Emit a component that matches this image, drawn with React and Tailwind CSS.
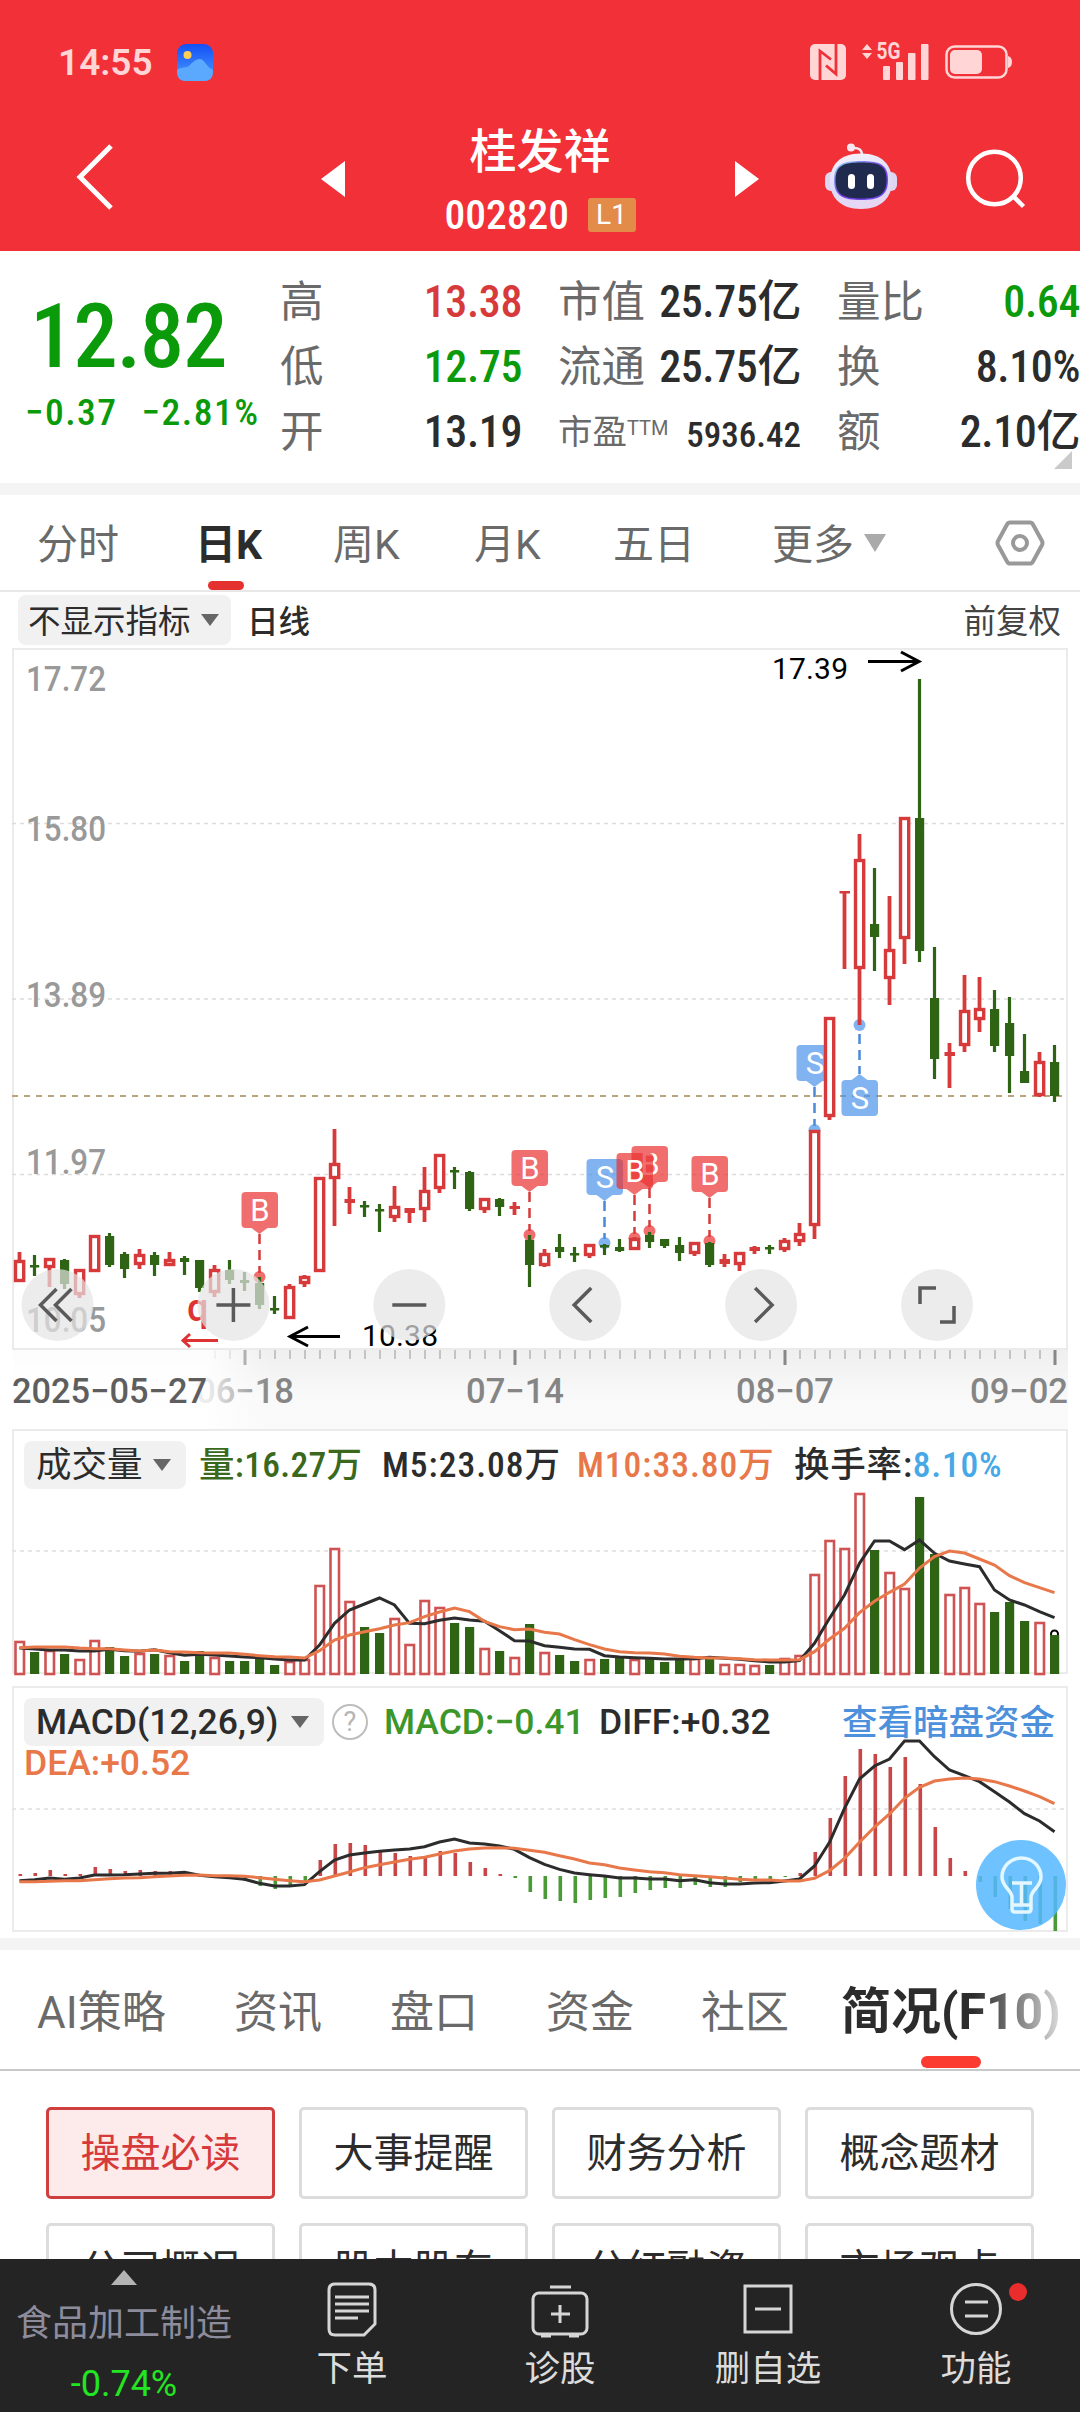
// src/App.jsx
import React from 'react';
import { clsx } from 'clsx';

// --- Dados do gráfico ---
// [cor, máxima, topo do corpo, base do corpo, mínima] em px da tela
const candles = [
    ['r', 1252, 1260, 1282, 1282], ['g', 1255, 1265, 1267, 1276], ['r', 1258, 1258, 1268, 1287], ['g', 1259, 1260, 1284, 1289],
    ['r', 1269, 1269, 1295, 1298], ['r', 1235, 1235, 1272, 1272], ['g', 1233, 1236, 1265, 1267], ['g', 1252, 1254, 1269, 1278],
    ['r', 1249, 1254, 1265, 1269], ['g', 1252, 1255, 1265, 1276], ['r', 1252, 1259, 1266, 1266], ['g', 1256, 1258, 1262, 1275],
    ['g', 1260, 1260, 1288, 1292], ['r', 1265, 1269, 1293, 1297], ['g', 1260, 1270, 1280, 1284], ['g', 1272, 1280, 1283, 1291],
    ['g', 1277, 1283, 1305, 1309], ['g', 1296, 1308, 1310, 1314], ['r', 1284, 1286, 1319, 1319], ['r', 1275, 1276, 1284, 1287],
    ['r', 1177, 1177, 1272, 1272], ['r', 1129, 1163, 1179, 1226], ['r', 1187, 1199, 1203, 1214], ['g', 1201, 1205, 1207, 1217],
    ['g', 1204, 1209, 1211, 1232], ['r', 1186, 1206, 1218, 1222], ['r', 1208, 1208, 1213, 1223], ['r', 1167, 1190, 1210, 1222],
    ['r', 1154, 1154, 1189, 1193], ['g', 1167, 1170, 1172, 1189], ['g', 1171, 1172, 1209, 1211], ['r', 1198, 1198, 1210, 1213],
    ['g', 1198, 1199, 1207, 1216], ['r', 1202, 1206, 1209, 1215], ['g', 1235, 1240, 1265, 1287], ['r', 1249, 1253, 1266, 1267],
    ['g', 1234, 1247, 1252, 1258], ['g', 1247, 1253, 1255, 1262], ['r', 1244, 1244, 1256, 1258], ['g', 1244, 1245, 1247, 1255],
    ['g', 1239, 1247, 1251, 1252], ['r', 1237, 1238, 1250, 1250], ['g', 1232, 1235, 1242, 1248], ['g', 1239, 1239, 1246, 1248],
    ['g', 1237, 1245, 1253, 1261], ['r', 1242, 1242, 1254, 1256], ['g', 1242, 1243, 1265, 1267], ['r', 1254, 1259, 1264, 1267],
    ['r', 1252, 1252, 1265, 1271], ['r', 1246, 1247, 1251, 1254], ['g', 1245, 1247, 1249, 1254], ['r', 1238, 1240, 1250, 1252],
    ['r', 1223, 1233, 1242, 1246], ['r', 1130, 1130, 1226, 1239], ['r', 1017, 1017, 1117, 1120], ['r', 891, 891, 893, 969],
    ['r', 834, 859, 969, 1025], ['g', 868, 924, 937, 971], ['r', 896, 949, 979, 1005], ['r', 817, 817, 939, 964],
    ['g', 679, 818, 951, 962], ['g', 947, 998, 1059, 1079], ['r', 1043, 1052, 1056, 1088], ['r', 975, 1010, 1046, 1052],
    ['r', 977, 1008, 1020, 1032], ['g', 990, 1009, 1046, 1052], ['g', 997, 1023, 1056, 1093], ['g', 1034, 1071, 1083, 1083],
    ['r', 1052, 1061, 1096, 1097], ['g', 1045, 1062, 1096, 1102],
];

const volumes = [
    33, 22, 24, 20, 15, 34, 27, 18, 21, 20, 19, 13, 23, 17, 13, 13, 17, 9, 13, 15,
    89, 126, 73, 47, 41, 56, 30, 74, 67, 51, 47, 26, 23, 17, 50, 22, 19, 13, 15, 15,
    17, 15, 16, 12, 16, 16, 18, 10, 10, 9, 9, 16, 19, 100, 134, 126, 181, 124, 102, 86,
    177, 120, 80, 87, 71, 62, 72, 53, 52, 39,
];

// Linhas em terços de px, a partir do topo de cada painel
const ma5 = [
    684, 687, 690, 690, 693, 693, 688, 692, 694, 689, 698, 706, 703, 705, 708, 711, 713, 717, 720, 720,
    675, 610, 570, 552, 534, 555, 610, 611, 601, 594, 600, 604, 632, 662, 663, 677, 682, 687, 688, 707,
    711, 713, 715, 717, 717, 716, 712, 715, 718, 722, 726, 726, 722, 670, 595, 525, 430, 363, 363, 389,
    360, 400, 423, 432, 440, 510, 540, 555, 575, 593,
];
const ma10 = [
    683, 681, 681, 681, 684, 686, 686, 690, 693, 690, 695, 696, 698, 699, 699, 703, 707, 710, 711, 714,
    692, 660, 645, 635, 626, 615, 608, 590, 576, 564, 575, 604, 620, 629, 627, 637, 642, 659, 674, 687,
    695, 698, 699, 702, 709, 712, 714, 714, 716, 719, 720, 720, 719, 695, 657, 625, 578, 544, 517, 492,
    444, 410, 393, 399, 417, 435, 467, 488, 503, 518,
];
const macd = [
    2, 3, 6, 2, 2, 9, 7, 5, 6, 5, 5, 4, -1, -1, -3, -5, -10, -13, -10, -6,
    16, 32, 33, 31, 26, 23, 20, 19, 25, 23, 14, 8, 2, -2, -16, -23, -25, -27, -24, -22,
    -21, -17, -14, -12, -12, -9, -11, -11, -6, -4, -4, -1, 3, 24, 58, 100, 127, 122, 109, 119,
    92, 49, 18, 5, -6, -21, -33, -45, -48, -55,
];
const diff = [
    602, 599, 594, 598, 594, 585, 585, 584, 582, 580, 580, 577, 586, 590, 593, 598, 610, 618, 618, 614,
    575, 540, 525, 519, 514, 510, 507, 500, 486, 477, 489, 492, 498, 508, 533, 553, 568, 579, 584, 588,
    594, 594, 597, 597, 602, 599, 608, 612, 612, 609, 608, 603, 597, 558, 487, 385, 297, 258, 237, 183,
    183, 230, 270, 287, 305, 335, 366, 401, 423, 455,
];
const dea = [
    605, 605, 604, 602, 602, 599, 596, 594, 593, 590, 588, 586, 585, 587, 587, 589, 593, 598, 602, 605,
    600, 588, 576, 563, 554, 546, 538, 532, 522, 513, 507, 504, 503, 505, 511, 517, 527, 537, 549, 554,
    564, 570, 575, 578, 584, 587, 590, 594, 598, 600, 600, 603, 603, 595, 572, 535, 487, 441, 402, 355,
    322, 303, 297, 294, 297, 305, 318, 333, 350, 371,
];

// Ordem importa: o último fica por cima
const markers = [
    { i: 16, type: 'B', top: 1192, dot: 1277 },
    { i: 34, type: 'B', top: 1150, dot: 1235 },
    { i: 39, type: 'S', top: 1159, dot: 1243 },
    { i: 42, type: 'B', top: 1146, dot: 1231 },
    { i: 41, type: 'B', top: 1153, dot: 1238 },
    { i: 46, type: 'B', top: 1156, dot: 1241 },
    { i: 53, type: 'S', top: 1045, dot: 1130 },
    { i: 56, type: 'S', top: 1080, dot: 1025, below: true },
];

const RED = '#d63a3a';
const GREEN = '#2f6414';
const cx = (i) => 19.5 + i * 15;
const toPoints = (arr, base) => arr.map((v, i) => `${cx(i)},${base + v / 3}`).join(' ');

const Caret = ({ className }) => (
    <svg viewBox="0 0 18 12" preserveAspectRatio="none" className={className}><path d="M0 0H18L9 12Z" fill="currentColor" /></svg>
);

const Num = ({ x, y, w, size = 35, fill = '#999', weight = 500, children }) => (
    <text x={x} y={y} textLength={w} lengthAdjust="spacingAndGlyphs" fontSize={size} fontWeight={weight} fill={fill}>{children}</text>
);

const Marker = ({ i, type, top, dot, below }) => {
    const x = cx(i);
    const fill = type === 'B' ? '#e93030' : '#4a93ea';
    const line = type === 'B' ? '#d63a3a' : '#4a88d8';
    return (
        <g>
            <rect x={x - 18} y={top} width="36.5" height="36" rx="4" fill={fill} fillOpacity="0.7" />
            <path d={below ? `M${x - 8} ${top}L${x} ${top - 6}L${x + 8} ${top}Z` : `M${x - 8} ${top + 36}L${x} ${top + 42}L${x + 8} ${top + 36}Z`} fill={fill} fillOpacity="0.7" />
            <text x={x + 0.5} y={top + 29} textAnchor="middle" fontSize="31" fill="#fff">{type}</text>
            <line x1={x} x2={x} y1={below ? dot + 9 : top + 42} y2={below ? top - 6 : dot - 4} stroke={line} strokeWidth="2.5" strokeDasharray="10 6" />
            <circle cx={x} cy={dot} r="6" fill={fill} fillOpacity="0.7" />
        </g>
    );
};

const Candle = ({ i, data }) => {
    const [c, high, top, bottom, low] = data;
    const x = cx(i);
    const color = c === 'r' ? RED : GREEN;
    const hollow = c === 'r' && bottom - top > 6;
    const wick = c === 'r' ? 3.8 : 3.2;
    return (
        <g>
            {top > high && <rect x={x - wick / 2} y={high} width={wick} height={top - high} fill={color} />}
            {low > bottom && <rect x={x - wick / 2} y={bottom} width={wick} height={low - bottom} fill={color} />}
            {hollow
                ? <rect x={x - 4} y={top + 1.5} width="8.2" height={bottom - top - 3} fill="#fff" stroke={color} strokeWidth="3.4" />
                : <rect x={c === 'r' ? x - 5 : x - 4.5} y={top} width={c === 'r' ? 10.5 : 9.2} height={Math.max(bottom - top, 2.5)} fill={color} />}
        </g>
    );
};

// --- Cabeçalho ---
const StatusBar = () => (
    <div className="flex h-[124px] items-center justify-between pr-[68px] pl-[58px] text-[#ffd5d6]">
        <div className="flex items-center">
            <span className="w-[95px] text-[37px] leading-none font-semibold whitespace-nowrap">14:55</span>
            <svg viewBox="0 0 36 37" className="ml-6 h-[37px] w-9">
                <defs>
                    <linearGradient id="sky" x1="0" y1="0" x2="0" y2="1">
                        <stop offset="0" stopColor="#1450f5" />
                        <stop offset="1" stopColor="#4a9cff" />
                    </linearGradient>
                </defs>
                <rect width="36" height="37" rx="9" fill="url(#sky)" />
                <circle cx="10.5" cy="11" r="4" fill="#ffcf55" />
                <path d="M0 26C5 22 9 25 13 21C18 16 24 11 29 20C31 23 34 25 36 26V28Q36 37 27 37H9Q0 37 0 28Z" fill="#5aa9ff" />
            </svg>
        </div>
        <div className="flex items-center">
            <svg viewBox="0 0 36 36" className="h-9 w-9">
                <rect width="36" height="36" rx="5" fill="currentColor" />
                <path d="M10 36V7L21 15.500M26 0V30L16 21.500" fill="none" stroke="#f13037" strokeWidth="2.800" />
            </svg>
            <svg viewBox="0 0 68 40" className="ml-4 h-10 w-[68px] overflow-visible" fill="currentColor">
                <path d="M0 8L5 2L10 8ZM0 11H10L5 17Z" />
                <text x="14.500" y="17" fontSize="23" fontWeight="700" textLength="24" lengthAdjust="spacingAndGlyphs">5G</text>
                <rect x="21" y="24" width="7" height="14" rx="1" />
                <rect x="34" y="20" width="7" height="18" rx="1" />
                <rect x="46" y="11" width="7.500" height="27" rx="1" />
                <rect x="59" y="2" width="7.500" height="36" rx="1" />
            </svg>
            <svg viewBox="0 0 67 34" className="ml-[15px] h-[34px] w-[67px]">
                <rect x="1.500" y="1.500" width="60" height="31" rx="8" fill="none" stroke="currentColor" strokeWidth="2.500" />
                <rect x="5" y="5" width="32" height="24" rx="5" fill="currentColor" />
                <path d="M63 11Q67 12 67 17T63 23Z" fill="currentColor" />
            </svg>
        </div>
    </div>
);

const TitleBar = () => (
    <div className="flex h-[127px] items-start text-white">
        <svg viewBox="0 0 40 68" className="mt-[19px] ml-[75px] h-[68px] w-10"><path d="M36 3L5 34L36 65" fill="none" stroke="#fff" strokeWidth="5" /></svg>
        <svg viewBox="0 0 24 36" className="mt-[37px] ml-[206px] h-9 w-6"><path d="M24 0V36L0 18Z" fill="#fff" /></svg>
        <div className="ml-[88px] flex w-[214px] flex-col items-center">
            <div className="text-[47px] leading-[56px] font-medium">桂发祥</div>
            <div className="mt-[15px] flex items-center gap-[14px]">
                <span className="w-[129px] text-[41.500px] leading-[40px] font-medium [font-stretch:75%]">002820</span>
                <span className="h-[34px] w-12 rounded-[3px] bg-[#e38c4a] text-center text-[28px] leading-[34px] [font-stretch:90%]">L1</span>
            </div>
        </div>
        <svg viewBox="0 0 24 36" className="mt-[37px] ml-[88px] h-9 w-6"><path d="M0 0V36L24 18Z" fill="#fff" /></svg>
        <svg viewBox="0 0 72 68" className="mt-[19px] ml-[66px] h-[68px] w-[72px]">
            <defs>
                <linearGradient id="head" x1="0" y1="0" x2="0.3" y2="1">
                    <stop offset="0" stopColor="#fbf3fa" /><stop offset="0.6" stopColor="#dcdcf8" /><stop offset="1" stopColor="#e6d6f2" />
                </linearGradient>
                <linearGradient id="visor" x1="0" y1="0" x2="1" y2="1">
                    <stop offset="0" stopColor="#8be0f5" /><stop offset="0.5" stopColor="#7a3fe0" /><stop offset="1" stopColor="#6a4cf0" />
                </linearGradient>
            </defs>
            <path d="M37 12C37 7 34 4.500 28 5" fill="none" stroke="#f3e6f2" strokeWidth="2.500" />
            <circle cx="26" cy="4.500" r="4" fill="#f6e6f2" />
            <rect x="0" y="29" width="72" height="19" rx="6" fill="#ddd6f2" />
            <path d="M36 10.500C58 10.500 67 23 67 38C67 54 57 66 36 66S5 54 5 38C5 23 14 10.500 36 10.500Z" fill="url(#head)" />
            <path d="M36 18C54 18 63 21 63 37C63 53 54 57 36 57S9 53 9 37C9 21 18 18 36 18Z" fill="url(#visor)" />
            <path d="M36 19.500C53 19.500 61.500 22 61.500 37C61.500 52 53 55.500 36 55.500S10.500 52 10.500 37C10.500 22 19 19.500 36 19.500Z" fill="#1f2a4e" />
            <rect x="23" y="31" width="7" height="15" rx="3.500" fill="#fff" />
            <rect x="42" y="31" width="7" height="15" rx="3.500" fill="#fff" />
        </svg>
        <svg viewBox="0 0 64 64" className="mt-[23px] ml-[67px] h-16 w-16" fill="none" stroke="#fff" strokeWidth="4.500">
            <circle cx="30.500" cy="31" r="26.300" />
            <path d="M49 49L59.500 59.500" />
        </svg>
    </div>
);

// --- Cotação ---
const VALUE_COLORS = { up: 'text-[#d63a3a]', down: 'text-[#0a9a0a]', flat: 'text-[#2c2c2c]' };

const Stat = ({ label, value, tone = 'flat' }) => (
    <div className="flex items-center justify-between">
        <span className="text-[43.500px] text-[#6a6a6a]">{label}</span>
        <span className={clsx('text-[44px] font-medium tracking-[-0.4px] [font-stretch:75%]', VALUE_COLORS[tone])}>{value}</span>
    </div>
);

const Quote = () => (
    <div className="relative flex h-[232px] pt-[19px] leading-[65px] whitespace-nowrap">
        <div className="w-[280px] text-[#0a9a0a]">
            <div className="mt-[25px] ml-[30px] text-[89px] leading-[84px] font-medium tracking-[-1.300px] [font-stretch:75%]">12.82</div>
            <div className="ml-[25px] flex gap-[24px] text-[37.500px] leading-[66px] font-medium tracking-[1.500px] [font-stretch:75%]">
                <span>−0.37</span><span>−2.81%</span>
            </div>
        </div>
        <div className="w-[242px]">
            <Stat label="高" value="13.38" tone="up" />
            <Stat label="低" value="12.75" tone="down" />
            <Stat label="开" value="13.19" />
        </div>
        <div className="ml-[36px] w-[243px]">
            <Stat label="市值" value="25.75亿" />
            <Stat label="流通" value="25.75亿" />
            <div className="flex items-center justify-between">
                <span className="text-[34.500px] text-[#6a6a6a]">市盈<span className="relative -top-[9px] text-[20px]">TTM</span></span>
                <span className="text-[35px] font-medium text-[#2c2c2c] [font-stretch:75%]">5936.42</span>
            </div>
        </div>
        <div className="ml-[36px] w-[243px]">
            <Stat label="量比" value="0.64" tone="down" />
            <Stat label="换" value="8.10%" />
            <Stat label="额" value="2.10亿" />
        </div>
        <svg viewBox="0 0 18 18" className="absolute right-2 bottom-[14px] h-[18px] w-[18px]"><path d="M18 0V18H0Z" fill="#cacaca" /></svg>
    </div>
);

const PeriodTabs = () => (
    <div className="flex h-[97px] items-center border-b-2 border-[#e8e8e8] pt-[6px] pl-[37px] text-[41px] text-[#6a6a6a] whitespace-nowrap">
        <span className="w-[158px]">分时</span>
        <div className="relative w-[138px]">
            <span className="font-bold text-[#2c2c2c]">日K</span>
            <span className="absolute -bottom-[14px] left-[13px] h-[9px] w-9 rounded-full bg-[#e53030]" />
        </div>
        <span className="w-[141px]">周K</span>
        <span className="w-[139px]">月K</span>
        <span className="w-[159px]">五日</span>
        <span>更多</span>
        <Caret className="-mt-[5px] ml-2.5 h-[18px] w-[22px] text-[#aaa]" />
        <svg viewBox="0 0 50 46" className="-mt-[6px] ml-[109px] h-[46px] w-[50px]" fill="none" stroke="#999" strokeWidth="4">
            <path d="M15 2.500H35Q37 2.500 38 4.500L47 21Q48 23 47 25L38 41.500Q37 43.500 35 43.500H15Q13 43.500 12 41.500L3 25Q2 23 3 21L12 4.500Q13 2.500 15 2.500Z" />
            <circle cx="25" cy="23" r="7" />
        </svg>
    </div>
);

const IndicatorBar = () => (
    <div className="flex h-[56px] items-center pr-[19px] pl-[18px] text-[32.500px] text-[#2c2c2c]">
        <div className="flex h-[50px] w-[213px] items-center rounded-lg bg-[#f1f1f1] pl-2.5">
            <span className="pt-[5px]">不显示指标</span><Caret className="ml-2.5 h-3 w-[18px] text-[#666]" />
        </div>
        <span className="ml-[16px] pt-[5px] text-[31.500px] font-medium">日线</span>
        <span className="ml-auto pt-[5px] text-[#444]">前复权</span>
    </div>
);

// --- Gráficos ---
const controls = ['M-1 -16L-17 0L-1 16M14 -16L-2 0L14 16', 'M-17 0H17M0 -17V17', 'M-17 0H17', 'M6 -17L-11 0L6 17', 'M-6 -17L11 0L-6 17', 'M-17 -1V-17H-1M3 17H17V1'];

const KLineChart = () => (
    <svg viewBox="0 648 1080 782" className="block h-[782px] w-full">
        <defs>
            <linearGradient id="axis" x1="0" y1="0" x2="0" y2="1">
                <stop offset="0" stopColor="#efefef" /><stop offset="0.6" stopColor="#f9f9f9" /><stop offset="1" stopColor="#fafafa" />
            </linearGradient>
            <linearGradient id="fade" x1="0" y1="0" x2="1" y2="0">
                <stop offset="0" stopColor="#fff" stopOpacity="0.85" /><stop offset="1" stopColor="#fff" stopOpacity="0" />
            </linearGradient>
        </defs>
        <rect x="13" y="1349" width="1055" height="80" fill="url(#axis)" />
        <rect x="13" y="649" width="1054" height="700" fill="#fff" stroke="#ebebeb" strokeWidth="2" />
        {[823.5, 999, 1174.5].map((y) => (
            <line key={y} x1="12" x2="1066" y1={y} y2={y} stroke="#dcdcdc" strokeWidth="1.300" strokeDasharray="4 4" />
        ))}
        <Num x={26} y={691} w={80}>17.72</Num>
        <Num x={26} y={841} w={80}>15.80</Num>
        <Num x={26} y={1007} w={80}>13.89</Num>
        <Num x={26} y={1174} w={80}>11.97</Num>
        <Num x={26} y={1332} w={80}>10.05</Num>
        <line x1="12" x2="1066" y1="1096" y2="1096" stroke="#b9a47b" strokeWidth="2" strokeDasharray="6 6" />

        {markers.map((m) => <Marker key={m.i} {...m} />)}
        {candles.map((c, i) => <Candle key={i} i={i} data={c} />)}

        <g fill="none" stroke="#000" strokeWidth="3">
            <path d="M868 661.500H919M901 652L919 661.500L901 671" />
            <path d="M340 1336.500H290M308 1327L290 1336.500L308 1346" />
        </g>
        <text x="772" y="679" fontSize="30" textLength="76">17.39</text>
        <text x="362" y="1346" fontSize="30" textLength="76">10.38</text>
        <text x="187" y="1321" fontSize="38" fontWeight="500" fill="#dd3333">q</text>
        <path d="M218 1340.500H183M190 1334L183 1340.500L190 1347" fill="none" stroke="#dd3333" strokeWidth="3" />

        {controls.map((d, i) => (
            <g key={d} transform={`translate(${57.5 + i * 175.9} 1305)`}>
                <circle r="36" fill="#e4e4e4" fillOpacity="0.7" />
                <path d={d} fill="none" stroke="#5a5a5a" strokeWidth="3.500" />
            </g>
        ))}

        {/* Eixo de datas */}
        {candles.map((_, i) => i > 12 && (
            <rect key={i} x={cx(i) - (i % 18 === 15 ? 1 : 0.5)} y="1350" width={i % 18 === 15 ? 3 : 2} height={i % 18 === 15 ? 15 : 9} fill={i % 18 === 15 ? '#888' : '#c4c4c4'} />
        ))}
        <Num x={196} y={1403} w={98} fill="#858585">06−18</Num>
        <Num x={466} y={1403} w={98} fill="#858585">07−14</Num>
        <Num x={736} y={1403} w={98} fill="#858585">08−07</Num>
        <Num x={970} y={1403} w={98} fill="#858585">09−02</Num>
        <rect x="10" y="1350" width="198" height="79" fill="#fff" fillOpacity="0.85" />
        <rect x="208" y="1350" width="62" height="79" fill="url(#fade)" />
        <Num x={12} y={1403} w={195} fill="#5e5e5e">2025−05−27</Num>
    </svg>
);

const VolumePanel = () => (
    <div className="relative h-[257px]">
        <svg viewBox="0 1429 1080 257" className="absolute inset-0 h-[257px] w-full">
            <path d="M13 1674V1430H1067V1674" fill="none" stroke="#ebebeb" strokeWidth="2" />
            <line x1="12" x2="1067" y1="1673" y2="1673" stroke="#ececec" strokeWidth="2" />
            <line x1="12" x2="1066" y1="1551" y2="1551" stroke="#e6e6e6" strokeWidth="2" strokeDasharray="4 4" />
            <circle cx="1054.500" cy="1634" r="3.500" fill="none" stroke="#000" strokeWidth="2" />
            {volumes.map((v, i) => (candles[i][0] === 'r'
                ? <rect key={i} x={cx(i) - 4} y={1675 - v} width="8.500" height={v - 1} fill="#fff" stroke="#cf5353" strokeWidth="2.600" />
                : <rect key={i} x={cx(i) - 4.5} y={1674 - v} width="9.200" height={v} fill={GREEN} />
            ))}
            <polyline points={toPoints(ma5, 1420)} fill="none" stroke="#2c2c2c" strokeWidth="3" />
            <polyline points={toPoints(ma10, 1420)} fill="none" stroke="#e8774a" strokeWidth="3" />
        </svg>
        <div className="relative flex h-[49px] items-center pl-6 pt-[22px] text-[35.500px] text-[#2c2c2c] whitespace-nowrap">
            <div className="flex h-12 w-[162px] shrink-0 items-center rounded-lg bg-[#f1f1f1] pl-3">
                <span className="pt-[3px]">成交量</span><Caret className="ml-2.5 h-3 w-[18px] text-[#666]" />
            </div>
            <span className="ml-[13px] w-[183px] pt-0.5 font-medium tracking-[0.300px] text-[#3a681c] [font-stretch:75%]">量:16.27万</span>
            <span className="w-[195px] pt-0.5 font-medium tracking-[1px] [font-stretch:75%]">M5:23.08万</span>
            <span className="w-[217px] pt-0.5 font-medium tracking-[1px] text-[#e8774a] [font-stretch:75%]">M10:33.80万</span>
            <span className="pt-0.5 font-medium tracking-[0.800px] [font-stretch:75%]">换手率:<span className="text-[#47a8e5]">8.10%</span></span>
        </div>
    </div>
);

const MacdPanel = () => (
    <div className="relative h-[252px]">
        <svg viewBox="0 1686 1080 252" className="absolute inset-0 h-[252px] w-full">
            <rect x="13" y="1687" width="1054" height="244" fill="#fff" stroke="#ebebeb" strokeWidth="2" />
            <line x1="12" x2="1066" y1="1809" y2="1809" stroke="#e6e6e6" strokeWidth="2" strokeDasharray="4 4" />
            {macd.map((v, i) => (
                <rect key={i} x={cx(i) - 1} y={v > 0 ? 1876 - v : 1876} width="3.600" height={Math.abs(v)} fill={v > 0 ? '#c84646' : '#4a9a38'} />
            ))}
            <polyline points={toPoints(diff, 1680)} fill="none" stroke="#2c2c2c" strokeWidth="3" />
            <polyline points={toPoints(dea, 1680)} fill="none" stroke="#e8774a" strokeWidth="3" />
        </svg>
        <div className="relative flex h-[60px] items-center pt-3 pr-[25px] pl-6 text-[35.500px] leading-[46px] text-[#2c2c2c] whitespace-nowrap">
            <div className="flex h-12 w-[300px] items-center rounded-lg bg-[#f1f1f1] pl-3">
                <span className="w-[245px] font-medium">MACD(12,26,9)</span><Caret className="ml-2.5 h-3 w-[18px] text-[#666]" />
            </div>
            <span className="ml-2 h-9 w-9 rounded-full border-[2.500px] border-[#bdbdbd] text-center text-[27px] leading-[32px] text-[#b5b5b5]">?</span>
            <span className="ml-4 w-[215px] font-medium text-[#3c962a]">MACD:−0.41</span>
            <span className="font-medium">DIFF:+0.32</span>
            <span className="ml-auto pt-0.5 font-medium text-[#4d90dc]">查看暗盘资金</span>
        </div>
        <div className="relative pl-6 text-[35.500px] leading-[34px] font-medium text-[#e8774a]">DEA:+0.52</div>
        <svg viewBox="0 0 90 90" className="absolute right-[14px] bottom-[8px] h-[90px] w-[90px]">
            <circle cx="45" cy="45" r="45" fill="#55b7ff" fillOpacity="0.85" />
            <g fill="none" stroke="#e2f7ff" strokeWidth="3.500" strokeLinejoin="round">
                <path d="M36 57C35 49 26 47 26 37A19.500 19 0 0 1 65 37C65 47 56 49 55 57V69Q55 72 52 72H39Q36 72 36 69ZM36 65H55" />
                <path d="M36 43H56M45.500 43V64" />
            </g>
        </svg>
    </div>
);

// --- Abas e atalhos ---
const F10Tabs = () => (
    <div className="flex h-[121px] items-center border-b-2 border-[#c8c8c8] pt-[6px] pl-[37px] text-[44px] text-[#6a6a6a] whitespace-nowrap">
        <span className="w-[197px]">AI策略</span>
        <span className="w-[156px]">资讯</span>
        <span className="w-[156px]">盘口</span>
        <span className="w-[155px]">资金</span>
        <span className="w-[140px]">社区</span>
        <div className="relative">
            <span className="bg-gradient-to-r from-[#2c2c2c] from-60% to-[#ddd] bg-clip-text text-[50px] font-bold text-transparent">简况(F10)</span>
            <span className="absolute -bottom-[18px] left-20 h-3 w-[60px] rounded-full bg-[#fb3b30]" />
        </div>
    </div>
);

const shortcuts = ['操盘必读', '大事提醒', '财务分析', '概念题材', '公司概况', '股本股东', '分红融资', '市场观点'];

const Shortcuts = () => (
    <div className="grid h-[188px] grid-cols-4 content-start gap-6 overflow-hidden px-[46px] pt-9">
        {shortcuts.map((name, i) => (
            <div
                key={name}
                className={clsx(
                    'flex h-[92px] items-center justify-center rounded-[5px] border-[3px] pt-px text-[40px]',
                    i === 0 ? 'border-[#cf3f3f] bg-[#fdeaea] text-[#d63a3a]' : 'border-[#dcdcdc] text-[#2c2c2c]'
                )}
            >
                {name}
            </div>
        ))}
    </div>
);

const NavItem = ({ label, children }) => (
    <div className="flex w-52 flex-col items-center pt-[19px]">
        <svg viewBox="0 0 60 60" className="h-[60px] w-[60px]" fill="none" stroke="#d6d6d6" strokeWidth="3">{children}</svg>
        <span className="mt-[5px] text-[35.500px] leading-[52px] text-[#dcdcdc]">{label}</span>
    </div>
);

const BottomNav = () => (
    <div className="flex h-[153px] bg-[#242424] whitespace-nowrap">
        <div className="flex w-[248px] flex-col items-center pt-[11px]">
            <Caret className="h-[15px] w-[26px] rotate-180 text-[#b4b4b4]" />
            <span className="mt-[14px] text-[36px] leading-[50px] text-[#8c8c9c]">食品加工制造</span>
            <span className="mt-2 text-[36px] leading-[54px] text-[#22e622]">-0.74%</span>
        </div>
        <NavItem label="下单">
            <path d="M13 6H47Q53 6 53 12V46L42 57H13Q7 57 7 51V12Q7 6 13 6Z" />
            <path d="M13 19H47M13 26H47M13 33H47M13 40H36" />
        </NavItem>
        <NavItem label="诊股">
            <rect x="3" y="15" width="54" height="41" rx="6" />
            <path d="M20 9H41M30 27V45M21 36H40M11 58H21M39 58H49" />
        </NavItem>
        <NavItem label="删自选">
            <rect x="7" y="8" width="46" height="46" />
            <path d="M17 31H43" />
        </NavItem>
        <div className="relative">
            <NavItem label="功能">
                <circle cx="30" cy="31" r="24.500" />
                <path d="M19 24H42M19 38H42" />
            </NavItem>
            <span className="absolute top-6 right-[53px] h-[18px] w-[18px] rounded-full bg-[#e92c2c]" />
        </div>
    </div>
);

export default function App() {
    return (
        <div className="flex h-[2412px] w-[1080px] flex-col overflow-hidden bg-white font-['Roboto','Noto_Sans_CJK_SC',sans-serif]">
            <header className="bg-[#f13037]">
                <StatusBar />
                <TitleBar />
            </header>
            <Quote />
            <div className="h-3 bg-[#f4f4f4]" />
            <PeriodTabs />
            <IndicatorBar />
            <div className="-mb-px"><KLineChart /></div>
            <VolumePanel />
            <MacdPanel />
            <div className="h-3 bg-[#f4f4f4]" />
            <F10Tabs />
            <Shortcuts />
            <BottomNav />
        </div>
    );
}
